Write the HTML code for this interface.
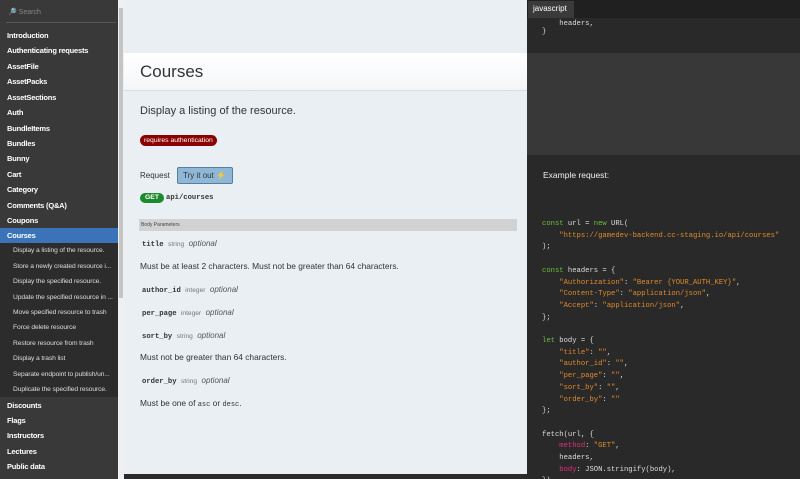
<!DOCTYPE html>
<html><head><meta charset="utf-8"><style>
*{margin:0;padding:0;box-sizing:border-box}
html,body{width:800px;height:479px;overflow:hidden}
body{position:relative;background:#e9eff3;font-family:"Liberation Sans",sans-serif}
.a{position:absolute;white-space:nowrap}
#side{position:absolute;left:0;top:0;width:118px;height:479px;background:#393939}
#sub{position:absolute;left:0;top:243px;width:118px;height:154px;background:#2c2c2c}
.si{position:absolute;left:7px;font-size:7.5px;color:#fff;font-weight:bold;letter-spacing:-0.2px}
.ss{position:absolute;left:13px;font-size:6.7px;color:#ddd;letter-spacing:-0.1px}
#sb{position:absolute;left:118px;top:0;width:6px;height:479px;background:#f0f0f0}
#right{position:absolute;left:527px;top:0;width:273px;height:479px;background:#292929}
.c{position:absolute;left:542px;font-family:"Liberation Mono",monospace;font-size:7.2px;color:#ddd;white-space:pre}
.o{color:#e08a2c}.g{color:#6bbf3a}.p{color:#e0307a}
.m{color:#333;font-size:8.4px}
.code{font-family:"Liberation Mono",monospace;font-weight:bold;font-size:7.2px;color:#333}
.t{font-size:6.6px;color:#777}.op{font-style:italic;color:#555;font-size:8px}
.pr{line-height:10px;height:10px}
</style></head><body>
<div id="side">
<div class="a" style="left:8px;top:8px;font-size:7px;color:#888">🔎 Search</div>
<div class="a" style="left:6px;top:22px;width:110px;height:1px;background:#555"></div>
<div class="si" style="top:31px">Introduction</div>
<div class="si" style="top:46px">Authenticating requests</div>
<div class="si" style="top:62px">AssetFile</div>
<div class="si" style="top:77px">AssetPacks</div>
<div class="si" style="top:93px">AssetSections</div>
<div class="si" style="top:108px">Auth</div>
<div class="si" style="top:124px">BundleItems</div>
<div class="si" style="top:139px">Bundles</div>
<div class="si" style="top:154px">Bunny</div>
<div class="si" style="top:170px">Cart</div>
<div class="si" style="top:185px">Category</div>
<div class="si" style="top:201px">Comments (Q&amp;A)</div>
<div class="si" style="top:216px">Coupons</div>
<div class="a" style="left:0;top:228px;width:118px;height:15px;background:#3b73b9"></div>
<div class="si" style="top:231px">Courses</div>
<div id="sub">
<div class="ss" style="top:4px">Display a listing of the resource.</div>
<div class="ss" style="top:20px">Store a newly created resource i...</div>
<div class="ss" style="top:35px">Display the specified resource.</div>
<div class="ss" style="top:51px">Update the specified resource in ...</div>
<div class="ss" style="top:66px">Move specified resource to trash</div>
<div class="ss" style="top:81px">Force delete resource</div>
<div class="ss" style="top:97px">Restore resource from trash</div>
<div class="ss" style="top:112px">Display a trash list</div>
<div class="ss" style="top:128px">Separate endpoint to publish/un...</div>
<div class="ss" style="top:143px">Duplicate the specified resource.</div>
</div>
<div class="si" style="top:401px">Discounts</div>
<div class="si" style="top:416px">Flags</div>
<div class="si" style="top:431px">Instructors</div>
<div class="si" style="top:447px">Lectures</div>
<div class="si" style="top:462px">Public data</div>
</div>
<div id="sb"><div class="a" style="left:1px;top:8px;width:4px;height:290px;background:#c4c4c4"></div></div>
<div class="a" style="left:124px;top:53px;width:403px;height:38px;background:linear-gradient(#fff,#f3f6f8);border-bottom:1px solid #d8dde0"></div>
<div class="a" style="left:140px;top:62px;font-size:17px;color:#333">Courses</div>
<div class="a" style="left:140px;top:105px;font-size:11px;color:#333">Display a listing of the resource.</div>
<div class="a" style="left:140px;top:135px;height:11px;padding:0 4px;border-radius:6px;background:#8b0000;color:#fff;font-size:6.8px;line-height:11px">requires authentication</div>
<div class="a" style="left:140px;top:171px;font-size:8px;color:#333">Request</div>
<div class="a" style="left:177px;top:167px;width:56px;height:17px;border:1px solid #5a7e99;border-radius:2px;background:#8fb8d8;font-size:8px;color:#333;line-height:15px;padding-left:5px">Try it out <span style="color:#d8a020">⚡</span></div>
<div class="a" style="left:140px;top:193px;height:10px;padding:0 5px;border-radius:5px;background:#1b8a2f;color:#fff;font-size:6.8px;font-weight:bold;line-height:10px">GET</div>
<div class="a code" style="left:166px;top:194px">api/courses</div>
<div class="a" style="left:139px;top:219px;width:378px;height:12px;background:#d0d2d4;font-size:5px;color:#444;line-height:12px;padding-left:2px">Body Parameters</div>
<div class="a pr" style="left:142px;top:237px"><span class="code">title</span> <span class="t">string</span> <span class="op">optional</span></div>
<div class="a m" style="left:140px;top:261px">Must be at least 2 characters. Must not be greater than 64 characters.</div>
<div class="a pr" style="left:142px;top:283px"><span class="code">author_id</span> <span class="t">integer</span> <span class="op">optional</span></div>
<div class="a pr" style="left:142px;top:306px"><span class="code">per_page</span> <span class="t">integer</span> <span class="op">optional</span></div>
<div class="a pr" style="left:142px;top:329px"><span class="code">sort_by</span> <span class="t">string</span> <span class="op">optional</span></div>
<div class="a m" style="left:140px;top:352px">Must not be greater than 64 characters.</div>
<div class="a pr" style="left:142px;top:374px"><span class="code">order_by</span> <span class="t">string</span> <span class="op">optional</span></div>
<div class="a m" style="left:140px;top:398px">Must be one of <span style="font-family:'Liberation Mono',monospace;font-size:7px">asc</span> or <span style="font-family:'Liberation Mono',monospace;font-size:7px">desc</span>.</div>
<div class="a" style="left:124px;top:474px;width:403px;height:5px;background:#2a2a2a"></div>
<div id="right">
<div class="a" style="left:0;top:0;width:273px;height:18px;background:#202020"></div>
<div class="a" style="left:1px;top:1px;width:46px;height:17px;background:#3a3a3a;color:#fff;font-size:8px;line-height:16px;padding-left:5px">javascript</div>
<div class="a" style="left:0;top:53px;width:273px;height:102px;background:#383838"></div>
<div class="a" style="left:16px;top:170px;font-size:8.5px;color:#eee">Example request:</div>
</div>
<div class="c" style="top:20px">    headers,
}</div>
<div class="c" style="top:219px;line-height:11.7px"><span class="g">const</span> url = <span class="g">new</span> URL(
    <span class="o">"https://gamedev-backend.cc-staging.io/api/courses"</span>
);

<span class="g">const</span> headers = {
    <span class="o">"Authorization"</span>: <span class="o">"Bearer {YOUR_AUTH_KEY}"</span>,
    <span class="o">"Content-Type"</span>: <span class="o">"application/json"</span>,
    <span class="o">"Accept"</span>: <span class="o">"application/json"</span>,
};

<span class="g">let</span> body = {
    <span class="o">"title"</span>: <span class="o">""</span>,
    <span class="o">"author_id"</span>: <span class="o">""</span>,
    <span class="o">"per_page"</span>: <span class="o">""</span>,
    <span class="o">"sort_by"</span>: <span class="o">""</span>,
    <span class="o">"order_by"</span>: <span class="o">""</span>
};

fetch(url, {
    <span class="p">method</span>: <span class="o">"GET"</span>,
    headers,
    <span class="p">body</span>: JSON.stringify(body),
})</div>
</body></html>
